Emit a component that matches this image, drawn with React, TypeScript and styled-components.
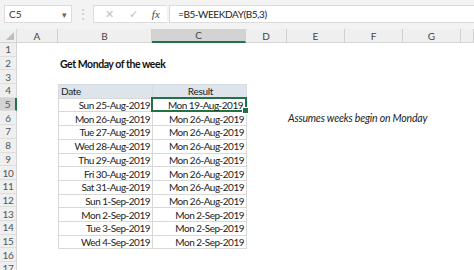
import React from "react";
import styled, { createGlobalStyle } from "styled-components";

const Global = createGlobalStyle`
  html, body { margin: 0; padding: 0; background: #fff; }
  body { font-family: Lato, "Open Sans", sans-serif; }
`;

const cols = [
  { name: "A", w: 41 },
  { name: "B", w: 94 },
  { name: "C", w: 94 },
  { name: "D", w: 41 },
  { name: "E", w: 58 },
  { name: "F", w: 58 },
  { name: "G", w: 58 },
  { name: "", w: 13 },
];

const dates = [
  ["Sun 25-Aug-2019", "Mon 19-Aug-2019"],
  ["Mon 26-Aug-2019", "Mon 26-Aug-2019"],
  ["Tue 27-Aug-2019", "Mon 26-Aug-2019"],
  ["Wed 28-Aug-2019", "Mon 26-Aug-2019"],
  ["Thu 29-Aug-2019", "Mon 26-Aug-2019"],
  ["Fri 30-Aug-2019", "Mon 26-Aug-2019"],
  ["Sat 31-Aug-2019", "Mon 26-Aug-2019"],
  ["Sun 1-Sep-2019", "Mon 26-Aug-2019"],
  ["Mon 2-Sep-2019", "Mon 2-Sep-2019"],
  ["Tue 3-Sep-2019", "Mon 2-Sep-2019"],
  ["Wed 4-Sep-2019", "Mon 2-Sep-2019"],
];

const App = () => {
  const rows = Array.from({ length: 17 }, (_, i) => i + 1);

  const cellFor = (r: number, c: string) => {
    if (r === 2 && c === "B") return <Title>Get Monday of the week</Title>;
    if (r === 6 && c === "E") return <Note>Assumes weeks begin on Monday</Note>;
    if (r === 4 && c === "B") return <TableHead>Date</TableHead>;
    if (r === 4 && c === "C") return <TableHead $center>Result</TableHead>;
    if (r >= 5 && r <= 15 && (c === "B" || c === "C")) {
      const d = dates[r - 5];
      return (
        <TableCell $selected={r === 5 && c === "C"}>
          {c === "B" ? d[0] : d[1]}
          {r === 5 && c === "C" ? <Handle /> : null}
        </TableCell>
      );
    }
    return null;
  };

  return (
    <>
      <Global />
      <Screen>
        <FormulaBar>
          <NameBox>
            <span>C5</span>
            <Arrow>▾</Arrow>
          </NameBox>
          <Dots>⋮</Dots>
          <FxGroup>
            <FxIcon>✕</FxIcon>
            <FxIcon>✓</FxIcon>
            <FxIcon $italic>fx</FxIcon>
          </FxGroup>
          <FormulaInput>=B5-WEEKDAY(B5,3)</FormulaInput>
        </FormulaBar>
        <Sheet>
          <Corner>
            <svg width="8" height="8" viewBox="0 0 8 8">
              <polygon points="8,0 8,8 0,8" fill="#bdbdbd" />
            </svg>
          </Corner>
          {cols.map((c, i) => (
            <ColHeader key={i} $active={c.name === "C"}>
              {c.name}
            </ColHeader>
          ))}
          {rows.map((r) => (
            <React.Fragment key={r}>
              <RowHeader $active={r === 5}>{r}</RowHeader>
              {cols.map((c, i) => (
                <Cell key={i}>{cellFor(r, c.name)}</Cell>
              ))}
            </React.Fragment>
          ))}
        </Sheet>
      </Screen>
    </>
  );
};

export default App;

const Screen = styled.div`
  width: 474px;
  height: 270px;
  overflow: hidden;
  background: #fff;
  color: #222;
`;

const FormulaBar = styled.div`
  height: 29px;
  background: #f3f3f3;
  display: flex;
  align-items: flex-start;
  padding: 5px 0 0 4px;
  box-sizing: border-box;
`;

const NameBox = styled.div`
  width: 68px;
  height: 18px;
  box-sizing: border-box;
  background: #fff;
  border: 1px solid #dcdcdc;
  display: flex;
  align-items: center;
  justify-content: space-between;
  padding: 0 4px 0 4px;
  font-size: 10px;
  color: #333;
`;

const Arrow = styled.span`
  font-size: 9px;
  color: #666;
`;

const Dots = styled.div`
  width: 21px;
  text-align: center;
  color: #c4c4c4;
  font-size: 12px;
  line-height: 18px;
`;

const FxGroup = styled.div`
  width: 74px;
  height: 18px;
  box-sizing: border-box;
  background: #fff;
  border: 1px solid #dcdcdc;
  border-right: none;
  display: flex;
  align-items: center;
  justify-content: space-around;
  padding-left: 4px;
`;

const FxIcon = styled.span<{ $italic?: boolean }>`
  font-size: 11px;
  font-family: ${(p) => (p.$italic ? '"Liberation Serif", serif' : "Lato, sans-serif")};
  font-style: ${(p) => (p.$italic ? "italic" : "normal")};
  color: ${(p) => (p.$italic ? "#444" : "#c0c0c0")};
`;

const FormulaInput = styled.div`
  flex: 1;
  height: 18px;
  margin-left: 2px;
  box-sizing: border-box;
  background: #fff;
  border: 1px solid #dcdcdc;
  border-right: none;
  padding-left: 8px;
  font-size: 10px;
  letter-spacing: -0.4px;
  line-height: 16px;
  color: #222;
`;

const Sheet = styled.div`
  display: grid;
  grid-template-columns: 17px 41px 94px 94px 41px 58px 58px 58px 13px;
  grid-template-rows: 14px repeat(17, 13.7px);
`;

const Corner = styled.div`
  background: #efefef;
  border-right: 1px solid #d4d4d4;
  border-bottom: 1px solid #d4d4d4;
  display: flex;
  align-items: flex-end;
  justify-content: flex-end;
  padding: 0 2px 2px 0;
  box-sizing: border-box;
`;

const ColHeader = styled.div<{ $active?: boolean }>`
  background: ${(p) => (p.$active ? "#d3d3d3" : "#efefef")};
  border-right: 1px solid #d0d0d0;
  border-bottom: ${(p) => (p.$active ? "2px solid #217346" : "1px solid #d4d4d4")};
  box-sizing: border-box;
  font-size: 10px;
  color: #444;
  display: flex;
  align-items: center;
  justify-content: center;
`;

const RowHeader = styled.div<{ $active?: boolean }>`
  background: ${(p) => (p.$active ? "#d3d3d3" : "#efefef")};
  border-right: ${(p) => (p.$active ? "2px solid #217346" : "1px solid #d4d4d4")};
  border-bottom: 1px solid #dedede;
  box-sizing: border-box;
  font-size: 10px;
  letter-spacing: -0.3px;
  color: #555;
  display: flex;
  align-items: center;
  justify-content: center;
`;

const Cell = styled.div`
  position: relative;
  display: flex;
  min-width: 0;
`;

const Title = styled.div`
  font-weight: 700;
  font-size: 10.5px;
  letter-spacing: -0.45px;
  white-space: nowrap;
  padding-left: 2px;
  align-self: center;
  color: #111;
`;

const Note = styled.div`
  font-style: italic;
  font-size: 10.5px;
  letter-spacing: -0.2px;
  white-space: nowrap;
  padding-left: 1px;
  align-self: center;
  color: #222;
`;

const TableHead = styled.div<{ $center?: boolean }>`
  flex: 1;
  background: #dde4ec;
  border: 1px solid #d6dce4;
  margin: 0 -1px -1px 0;
  font-size: 10px;
  letter-spacing: -0.3px;
  display: flex;
  align-items: center;
  justify-content: ${(p) => (p.$center ? "center" : "flex-start")};
  padding-left: 2px;
`;

const TableCell = styled.div<{ $selected?: boolean }>`
  flex: 1;
  position: relative;
  border: 1px solid #d9d9d9;
  margin: 0 -1px -1px 0;
  font-size: 10px;
  letter-spacing: -0.5px;
  display: flex;
  align-items: center;
  justify-content: flex-end;
  padding-right: 2px;
  white-space: nowrap;
  ${(p) =>
    p.$selected &&
    `
    border: 2px solid #217346;
    z-index: 2;
    margin: -1px -1px -1px -1px;
  `}
`;

const Handle = styled.span`
  position: absolute;
  right: -4px;
  bottom: -4px;
  width: 5px;
  height: 5px;
  background: #217346;
  border: 1px solid #fff;
`;
